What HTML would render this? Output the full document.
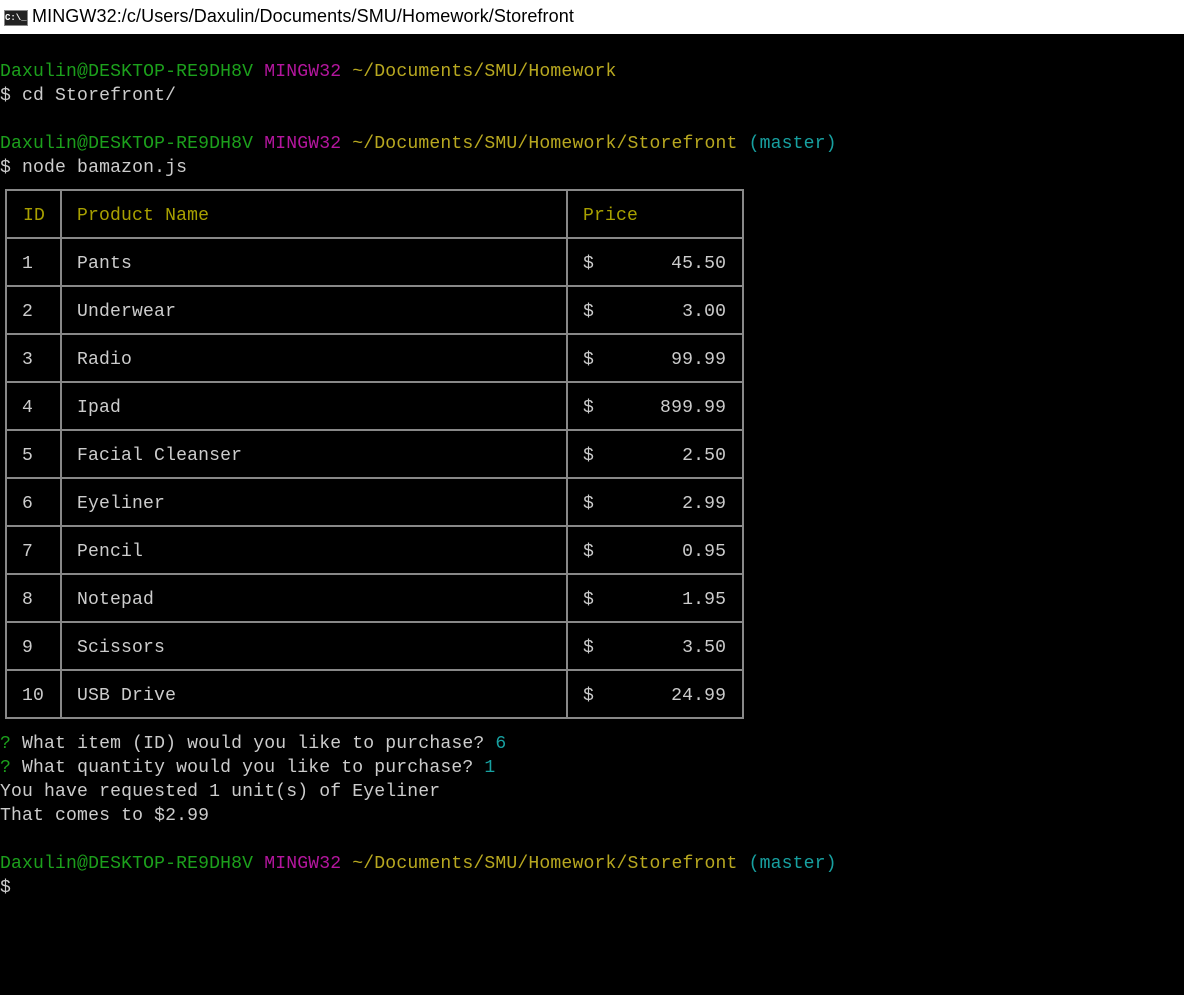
<!DOCTYPE html>
<html><head><meta charset="utf-8"><style>
body{margin:0;width:1184px;height:995px;background:#000;overflow:hidden;position:relative;font-family:"Liberation Mono",monospace;font-size:18.1px;letter-spacing:0.15px;color:#cccccc}
.title{position:absolute;left:0;top:0;width:1184px;height:34px;background:#fff;color:#000;font-family:"Liberation Sans",sans-serif;font-size:18px;letter-spacing:0}
.title span{position:absolute;left:32px;top:6px;letter-spacing:0.1px}
.ico{position:absolute;left:4px;top:10px;width:22px;height:14px;background:#222;border:1px solid #888;color:#fff;font-size:9px;line-height:14px;text-align:left;font-weight:bold;font-family:"Liberation Mono",monospace}
.l{position:absolute;left:0;white-space:pre;line-height:24px}
.g{color:#1ca01c}.p{color:#b4169e}.y{color:#b8a820}.c{color:#17a0a0}.o{color:#a8a000}
.h{position:absolute;background:#888}
.t{position:absolute;white-space:pre;line-height:24px}
</style></head><body>
<div class="title"><div class="ico">C:\_</div><span>MINGW32:/c/Users/Daxulin/Documents/SMU/Homework/Storefront</span></div>
<div class="l" style="top:60px"><span class="g">Daxulin@DESKTOP-RE9DH8V</span> <span class="p">MINGW32</span> <span class="y">~/Documents/SMU/Homework</span></div>
<div class="l" style="top:84px">$ cd Storefront/</div>
<div class="l" style="top:132px"><span class="g">Daxulin@DESKTOP-RE9DH8V</span> <span class="p">MINGW32</span> <span class="y">~/Documents/SMU/Homework/Storefront</span> <span class="c">(master)</span></div>
<div class="l" style="top:156px">$ node bamazon.js</div>

<div class="h" style="left:5px;top:189px;width:739px;height:2px"></div>
<div class="h" style="left:5px;top:717px;width:739px;height:2px"></div>
<div class="h" style="left:5px;top:189px;width:2px;height:530px"></div>
<div class="h" style="left:742px;top:189px;width:2px;height:530px"></div>
<div class="h" style="left:60px;top:189px;width:2px;height:530px"></div>
<div class="h" style="left:566px;top:189px;width:2px;height:530px"></div>
<div class="h" style="left:5px;top:237px;width:739px;height:2px"></div>
<div class="h" style="left:5px;top:285px;width:739px;height:2px"></div>
<div class="h" style="left:5px;top:333px;width:739px;height:2px"></div>
<div class="h" style="left:5px;top:381px;width:739px;height:2px"></div>
<div class="h" style="left:5px;top:429px;width:739px;height:2px"></div>
<div class="h" style="left:5px;top:477px;width:739px;height:2px"></div>
<div class="h" style="left:5px;top:525px;width:739px;height:2px"></div>
<div class="h" style="left:5px;top:573px;width:739px;height:2px"></div>
<div class="h" style="left:5px;top:621px;width:739px;height:2px"></div>
<div class="h" style="left:5px;top:669px;width:739px;height:2px"></div>

<div class="t o" style="left:23px;top:204px">ID</div><div class="t o" style="left:77px;top:204px">Product Name</div><div class="t o" style="left:583px;top:204px">Price</div>
<div class="t" style="left:22px;top:252px">1</div><div class="t" style="left:77px;top:252px">Pants</div><div class="t" style="left:583px;top:252px">$       45.50</div>
<div class="t" style="left:22px;top:300px">2</div><div class="t" style="left:77px;top:300px">Underwear</div><div class="t" style="left:583px;top:300px">$        3.00</div>
<div class="t" style="left:22px;top:348px">3</div><div class="t" style="left:77px;top:348px">Radio</div><div class="t" style="left:583px;top:348px">$       99.99</div>
<div class="t" style="left:22px;top:396px">4</div><div class="t" style="left:77px;top:396px">Ipad</div><div class="t" style="left:583px;top:396px">$      899.99</div>
<div class="t" style="left:22px;top:444px">5</div><div class="t" style="left:77px;top:444px">Facial Cleanser</div><div class="t" style="left:583px;top:444px">$        2.50</div>
<div class="t" style="left:22px;top:492px">6</div><div class="t" style="left:77px;top:492px">Eyeliner</div><div class="t" style="left:583px;top:492px">$        2.99</div>
<div class="t" style="left:22px;top:540px">7</div><div class="t" style="left:77px;top:540px">Pencil</div><div class="t" style="left:583px;top:540px">$        0.95</div>
<div class="t" style="left:22px;top:588px">8</div><div class="t" style="left:77px;top:588px">Notepad</div><div class="t" style="left:583px;top:588px">$        1.95</div>
<div class="t" style="left:22px;top:636px">9</div><div class="t" style="left:77px;top:636px">Scissors</div><div class="t" style="left:583px;top:636px">$        3.50</div>
<div class="t" style="left:22px;top:684px">10</div><div class="t" style="left:77px;top:684px">USB Drive</div><div class="t" style="left:583px;top:684px">$       24.99</div>

<div class="l" style="top:732px"><span class="g">?</span> What item (ID) would you like to purchase? <span class="c">6</span></div>
<div class="l" style="top:756px"><span class="g">?</span> What quantity would you like to purchase? <span class="c">1</span></div>
<div class="l" style="top:780px">You have requested 1 unit(s) of Eyeliner</div>
<div class="l" style="top:804px">That comes to $2.99</div>
<div class="l" style="top:852px"><span class="g">Daxulin@DESKTOP-RE9DH8V</span> <span class="p">MINGW32</span> <span class="y">~/Documents/SMU/Homework/Storefront</span> <span class="c">(master)</span></div>
<div class="l" style="top:876px">$</div>
</body></html>
